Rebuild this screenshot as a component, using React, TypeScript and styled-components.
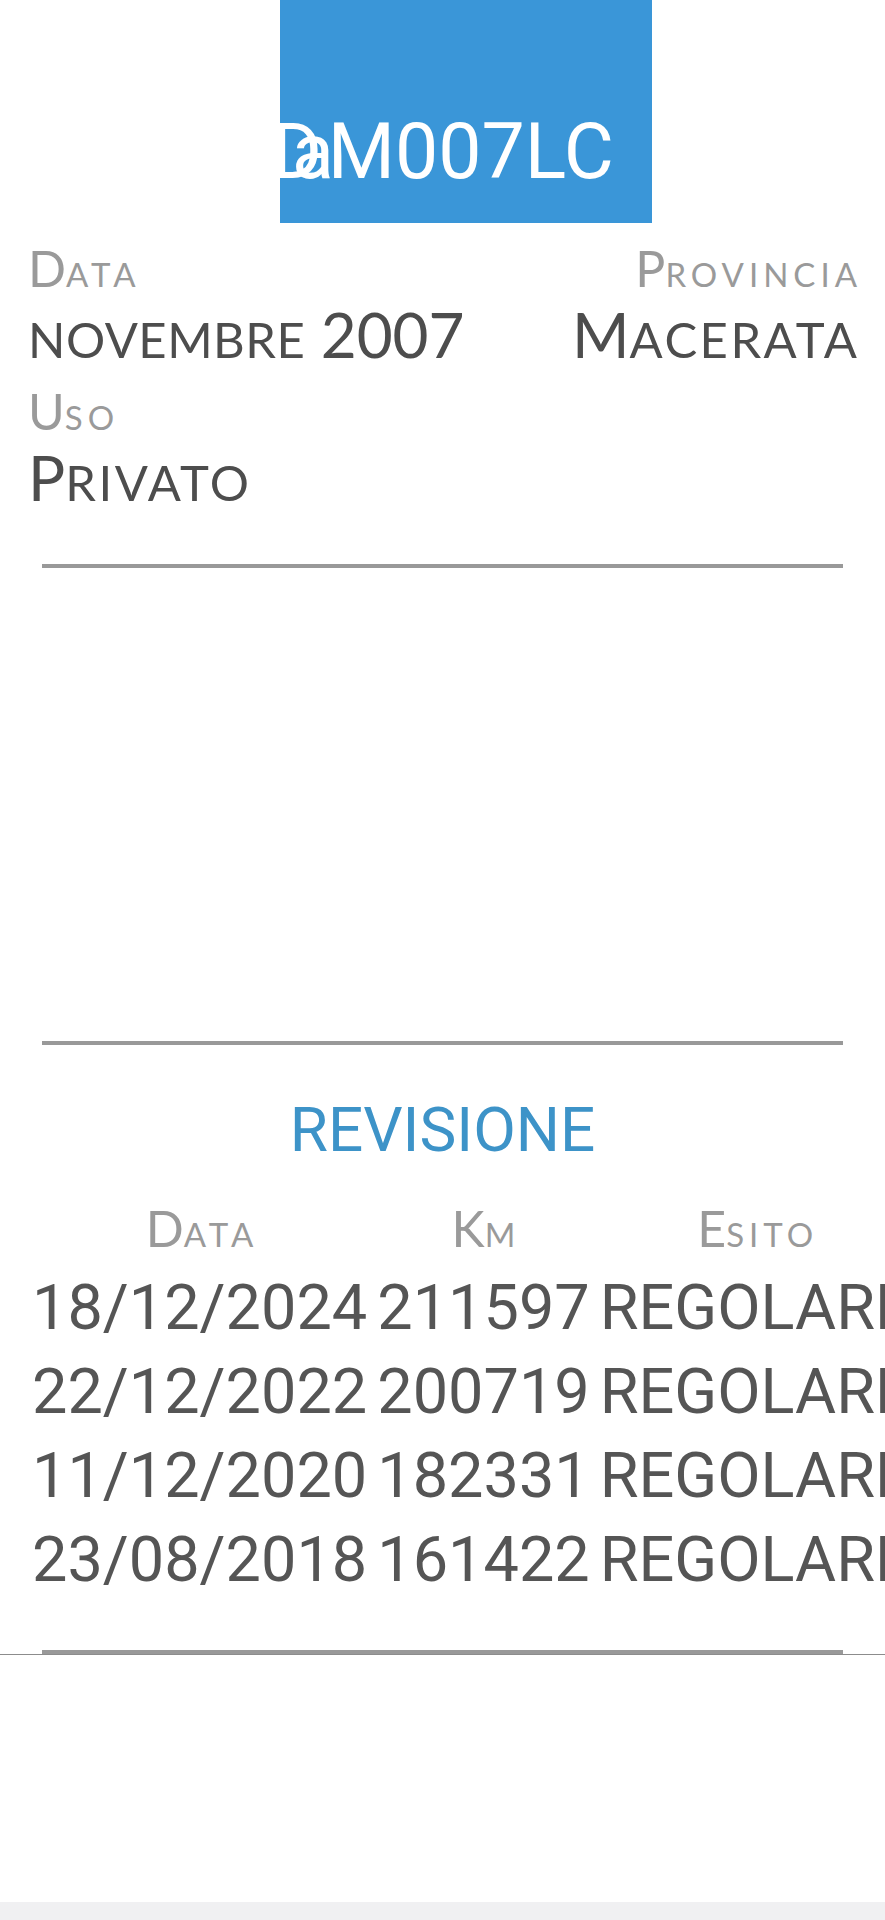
import styled, { createGlobalStyle } from "styled-components";

const GlobalStyle = createGlobalStyle`
  html, body {
    margin: 0;
    padding: 0;
    background: #fff;
    overflow-x: hidden;
  }
  body {
    font-family: "Lato", "Noto Sans", sans-serif;
  }
`;

const Page = styled.div`
  width: 885px;
  min-height: 1920px;
  display: flex;
  flex-direction: column;
  overflow: hidden;
`;

const Plate = styled.div`
  margin-left: 280px;
  width: 372px;
  height: 223px;
  box-sizing: border-box;
  padding: 117px 38px 0 0;
  background: #3a96d8;
  display: flex;
  justify-content: flex-end;
  align-items: flex-start;
  overflow: hidden;
  font-family: Roboto, sans-serif;
  font-size: 77px;
  line-height: 70px;
  color: #fff;
  white-space: nowrap;
`;

const GhostLetter = styled.span<{ $overlap: number }>`
  margin-right: ${({ $overlap }) => -$overlap}px;
`;

const Fields = styled.div`
  display: grid;
  grid-template-columns: 1fr 1fr;
  padding: 15px 28px 0;
`;

const Field = styled.div<{ $right?: boolean }>`
  text-align: ${({ $right }) => ($right ? "right" : "left")};
  margin-bottom: 11px;
  white-space: nowrap;
`;

const Label = styled.div`
  font-size: 50px;
  line-height: 60px;
  color: #9a9a9a;
`;

const Value = styled.div`
  font-size: 62px;
  line-height: 72px;
  color: #4d4d4d;
`;

const Small = styled.span<{ $size: number; $spacing: number }>`
  font-size: ${({ $size }) => $size}px;
  line-height: 1;
  letter-spacing: ${({ $spacing }) => $spacing}px;
  margin-right: ${({ $spacing }) => -$spacing}px;
`;

const Divider = styled.div<{ $top: number }>`
  height: 4px;
  margin: ${({ $top }) => $top}px 42px 0;
  background: #999;
`;

const Revision = styled.section`
  border-bottom: 1px solid #8c8c8c;
`;

const Title = styled.h2`
  margin: 45px 0 0;
  font-family: Roboto, sans-serif;
  font-weight: 400;
  font-size: 62px;
  line-height: 80px;
  color: #3d93c8;
  text-align: center;
`;

const Table = styled.div`
  display: grid;
  grid-template-columns: repeat(3, max-content);
  column-gap: 10px;
  margin-top: 28px;
  padding-left: 32px;
  white-space: nowrap;
`;

const HeadCell = styled.div`
  font-size: 50px;
  line-height: 60px;
  padding-bottom: 8px;
  color: #9a9a9a;
  text-align: center;
`;

const Cell = styled.div`
  font-family: Roboto, sans-serif;
  font-size: 63px;
  line-height: 84px;
  color: #555;
`;

const Footer = styled.div`
  margin-top: auto;
  height: 18px;
  background: #f0f0f2;
`;

const rows = [
  ["18/12/2024", "211597", "REGOLARE"],
  ["22/12/2022", "200719", "REGOLARE"],
  ["11/12/2020", "182331", "REGOLARE"],
  ["23/08/2018", "161422", "REGOLARE"],
];

type CapsProps = { first?: string; rest: string; size: number; spacing: number };

function Caps({ first = "", rest, size, spacing }: CapsProps) {
  return (
    <>
      {first}
      <Small $size={size} $spacing={spacing}>
        {rest}
      </Small>
    </>
  );
}

const label = { size: 33, spacing: 5 };
const value = { size: 49, spacing: 2.5 };

export default function App() {
  return (
    <Page>
      <GlobalStyle />
      <Plate>
        <GhostLetter $overlap={30}>D</GhostLetter>
        <GhostLetter $overlap={6}>a</GhostLetter>
        M007LC
      </Plate>

      <Fields>
        <Field>
          <Label>
            <Caps first="D" rest="ATA" {...label} />
          </Label>
          <Value>
            <Caps rest="NOVEMBRE" size={49} spacing={0.5} /> 2007
          </Value>
        </Field>
        <Field $right>
          <Label>
            <Caps first="P" rest="ROVINCIA" {...label} />
          </Label>
          <Value>
            <Caps first="M" rest="ACERATA" {...value} />
          </Value>
        </Field>
        <Field>
          <Label>
            <Caps first="U" rest="SO" {...label} />
          </Label>
          <Value>
            <Caps first="P" rest="RIVATO" {...value} />
          </Value>
        </Field>
      </Fields>

      <Divider $top={40} />
      <Divider $top={473} />

      <Revision>
        <Title>REVISIONE</Title>
        <Table>
          <HeadCell>
            <Caps first="D" rest="ATA" {...label} />
          </HeadCell>
          <HeadCell>
            <Caps first="K" rest="M" {...label} />
          </HeadCell>
          <HeadCell>
            <Caps first="E" rest="SITO" {...label} />
          </HeadCell>
          {rows.map((row) =>
            row.map((cell, i) => <Cell key={row[0] + i}>{cell}</Cell>)
          )}
        </Table>
        <Divider $top={48} />
      </Revision>

      <Footer />
    </Page>
  );
}
